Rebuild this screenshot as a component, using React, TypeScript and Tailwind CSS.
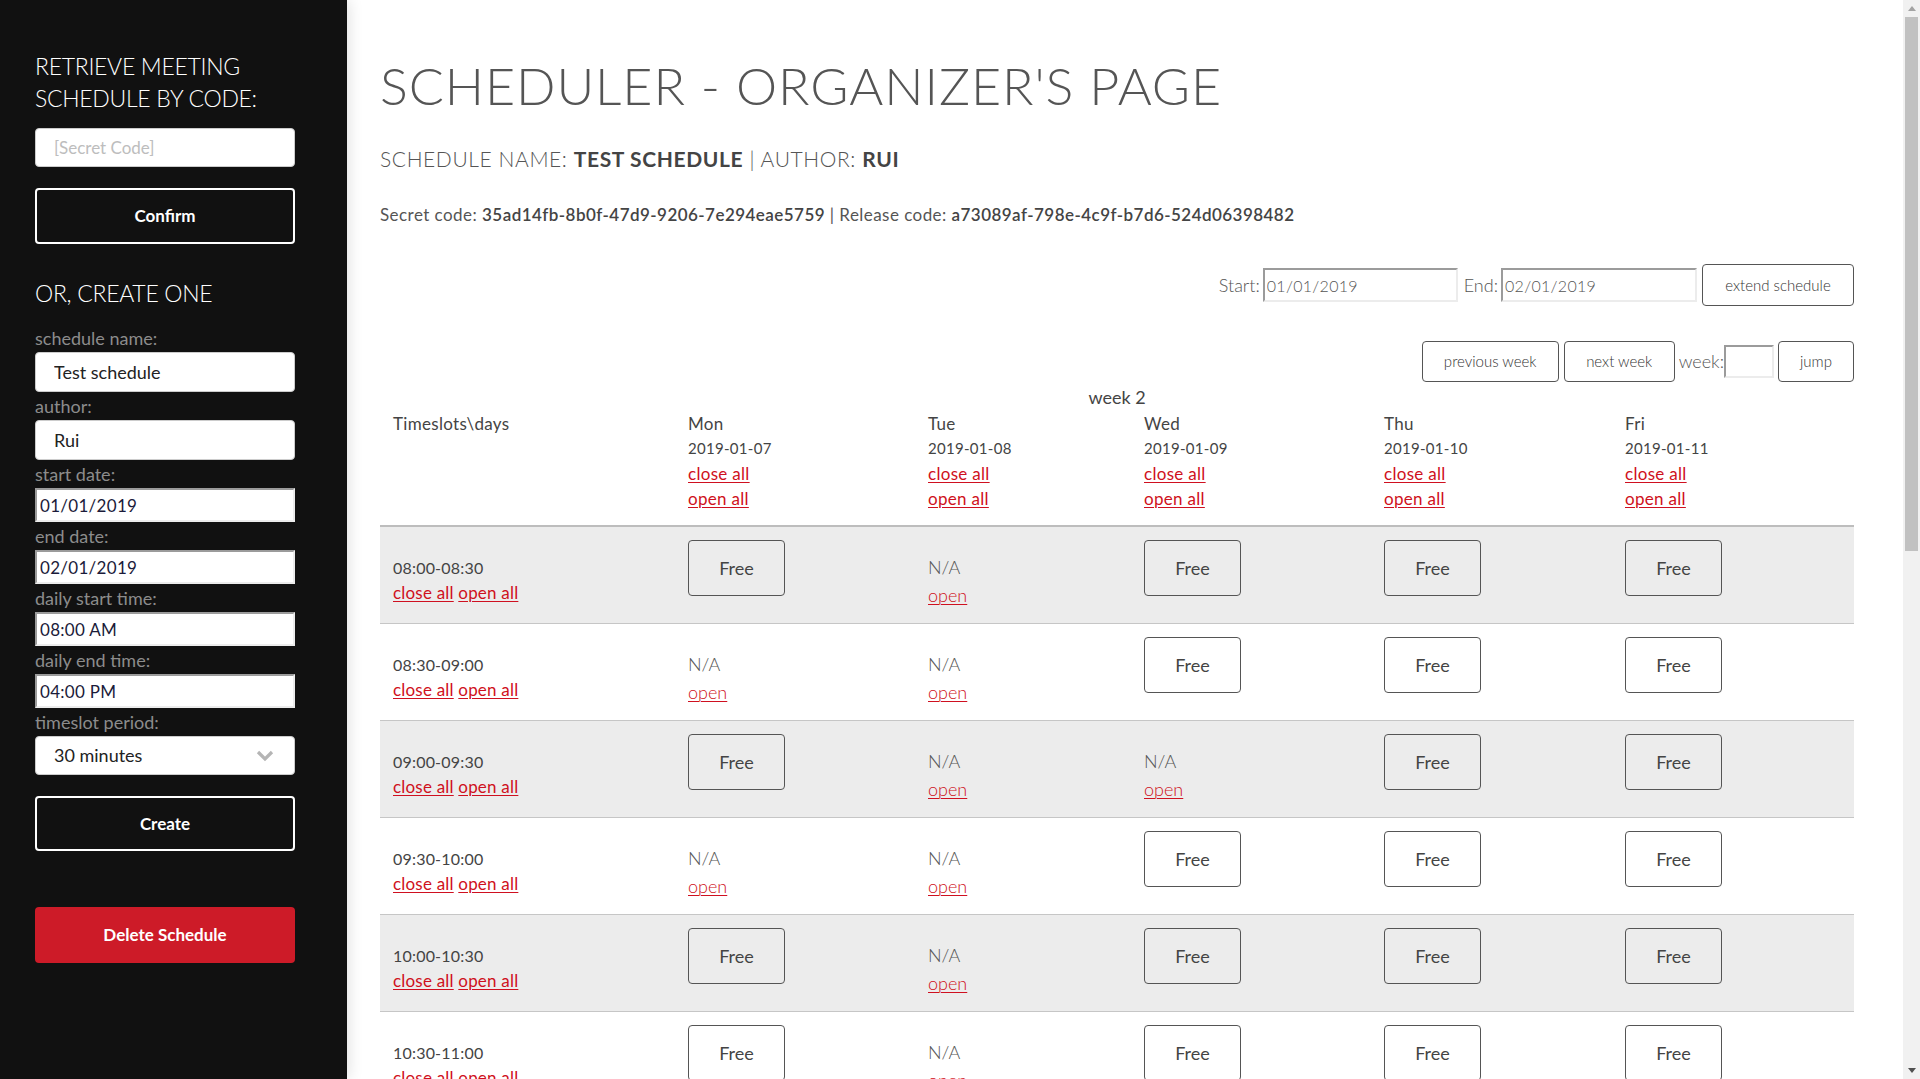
import React from "react";

type Cell = "F" | "N";
const rows: { time: string; cells: Cell[] }[] = [
  { time: "08:00-08:30", cells: ["F", "N", "F", "F", "F"] },
  { time: "08:30-09:00", cells: ["N", "N", "F", "F", "F"] },
  { time: "09:00-09:30", cells: ["F", "N", "N", "F", "F"] },
  { time: "09:30-10:00", cells: ["N", "N", "F", "F", "F"] },
  { time: "10:00-10:30", cells: ["F", "N", "F", "F", "F"] },
  { time: "10:30-11:00", cells: ["F", "N", "F", "F", "F"] },
  { time: "11:00-11:30", cells: ["F", "N", "F", "F", "F"] },
  { time: "11:30-12:00", cells: ["F", "N", "F", "F", "F"] },
];

const days = [
  { d: "Mon", date: "2019-01-07" },
  { d: "Tue", date: "2019-01-08" },
  { d: "Wed", date: "2019-01-09" },
  { d: "Thu", date: "2019-01-10" },
  { d: "Fri", date: "2019-01-11" },
];

const GRID = "grid grid-cols-[295px_240px_216px_240px_241px_242px]";
const LINK = "text-[#cf1020] underline underline-offset-2 decoration-1";
const INSET =
  "bg-white border-2 border-t-[#9b9b9b] border-l-[#9b9b9b] border-b-[#ececec] border-r-[#ececec] outline-none";

function Label({ children }: { children: React.ReactNode }) {
  return <div className="text-[18px] leading-[24px] text-[#8c8c8c] mb-[2px]">{children}</div>;
}

function Sidebar() {
  return (
    <div className="relative z-10 w-[347px] shrink-0 h-full bg-[#111111] pl-[35px] pt-[50px] shadow-[2px_0_14px_rgba(0,0,0,0.12)]">
      <div className="text-[23px] leading-[32px] font-light tracking-[-0.3px] text-white">
        RETRIEVE MEETING
        <br />
        SCHEDULE BY CODE:
      </div>
      <input
        className="mt-[14px] block h-[39px] w-[260px] rounded-[4px] bg-white border border-[#ccc] px-[18px] text-[17px] text-[#222] placeholder:text-[#bdbdbd] outline-none"
        placeholder="[Secret Code]"
      />
      <button className="mt-[21px] block h-[56px] w-[260px] rounded-[4px] border-2 border-white text-white text-[17px] font-bold">
        Confirm
      </button>
      <div className="mt-[33px] text-[23px] leading-[32px] font-light tracking-[-0.3px] text-white">OR, CREATE ONE</div>
      <div className="mt-[17px]">
        <Label>schedule name:</Label>
        <input
          className="block h-[40px] w-[260px] rounded-[4px] bg-white border border-[#ccc] px-[18px] text-[18px] text-[#222] outline-none mb-[2px]"
          defaultValue="Test schedule"
        />
        <Label>author:</Label>
        <input
          className="block h-[40px] w-[260px] rounded-[4px] bg-white border border-[#ccc] px-[18px] text-[18px] text-[#222] outline-none mb-[2px]"
          defaultValue="Rui"
        />
        <Label>start date:</Label>
        <input className={`block h-[34px] w-[260px] pl-[3px] text-[17px] tracking-[0.3px] text-[#1b1b3a] mb-[2px] ${INSET}`} defaultValue="01/01/2019" />
        <Label>end date:</Label>
        <input className={`block h-[34px] w-[260px] pl-[3px] text-[17px] tracking-[0.3px] text-[#1b1b3a] mb-[2px] ${INSET}`} defaultValue="02/01/2019" />
        <Label>daily start time:</Label>
        <input className={`block h-[34px] w-[260px] pl-[3px] text-[17px] tracking-[0.3px] text-[#1b1b3a] mb-[2px] ${INSET}`} defaultValue="08:00 AM" />
        <Label>daily end time:</Label>
        <input className={`block h-[34px] w-[260px] pl-[3px] text-[17px] tracking-[0.3px] text-[#1b1b3a] mb-[2px] ${INSET}`} defaultValue="04:00 PM" />
        <Label>timeslot period:</Label>
        <div className="flex h-[39px] w-[260px] items-center justify-between rounded-[4px] bg-white border border-[#ccc] pl-[18px] pr-[20px] text-[18px] text-[#222]">
          <span>30 minutes</span>
          <svg width="18" height="12" viewBox="0 0 18 12">
            <path d="M2 2 L9 9 L16 2" fill="none" stroke="#b5b5b5" strokeWidth="3.2" />
          </svg>
        </div>
      </div>
      <button className="mt-[21px] block h-[55px] w-[260px] rounded-[4px] border-2 border-white text-white text-[17px] font-bold">
        Create
      </button>
      <button className="mt-[56px] block h-[56px] w-[260px] rounded-[4px] bg-[#cd1b28] text-white text-[17px] font-bold">
        Delete Schedule
      </button>
    </div>
  );
}

function Btn({ children, w, h }: { children: React.ReactNode; w: string; h: string }) {
  return (
    <button className={`${w} ${h} rounded-[4px] border border-[#555] bg-white text-[15px] text-[#333]`}>{children}</button>
  );
}

function Scrollbar() {
  return (
    <div className="w-[17px] shrink-0 h-full bg-[#f1f1f1] flex flex-col items-center">
      <div className="h-[17px] flex items-center justify-center">
        <svg width="8" height="5" viewBox="0 0 8 5">
          <path d="M0 5 L4 0 L8 5 Z" fill="#a3a3a3" />
        </svg>
      </div>
      <div className="w-[13px] h-[534px] bg-[#c1c1c1]" />
      <div className="flex-1" />
      <div className="h-[17px] flex items-center justify-center">
        <svg width="8" height="5" viewBox="0 0 8 5">
          <path d="M0 0 L4 5 L8 0 Z" fill="#505050" />
        </svg>
      </div>
    </div>
  );
}

function Main() {
  return (
    <div className="flex-1 h-full overflow-hidden bg-white pl-[33px] pr-[49px] text-[#555]">
      <h1 className="mt-[59px] text-[52px] leading-none font-light tracking-[0.9px] text-[#555]">SCHEDULER - ORGANIZER'S PAGE</h1>
      <div className="mt-[37px] text-[21px] leading-none font-light tracking-[0.6px] text-[#555]">
        SCHEDULE NAME: <b className="font-bold text-[#444]">TEST SCHEDULE</b> | AUTHOR: <b className="font-bold text-[#444]">RUI</b>
      </div>
      <div className="mt-[37px] text-[17px] leading-none tracking-[0.45px] text-[#555]">
        Secret code: <span className="font-semibold text-[#444]">35ad14fb-8b0f-47d9-9206-7e294eae5759</span> | Release code:{" "}
        <span className="font-semibold text-[#444]">a73089af-798e-4c9f-b7d6-524d06398482</span>
      </div>
      <div className="mt-[41px] flex items-center justify-end text-[18px] font-light text-[#555]">
        <span className="mr-[3px]">Start:</span>
        <input className={`h-[34px] w-[195px] pl-[2px] text-[16px] tracking-[0.3px] text-[#555] ${INSET}`} defaultValue="01/01/2019" />
        <span className="ml-[6px] mr-[3px]">End:</span>
        <input className={`h-[34px] w-[196px] pl-[2px] text-[16px] tracking-[0.3px] text-[#555] ${INSET}`} defaultValue="02/01/2019" />
        <span className="ml-[5px]">
          <Btn w="w-[152px]" h="h-[42px]">extend schedule</Btn>
        </span>
      </div>
      <div className="mt-[35px] flex items-center justify-end text-[18px] font-light text-[#555]">
        <Btn w="w-[137px]" h="h-[41px]">previous week</Btn>
        <span className="ml-[5px]">
          <Btn w="w-[111px]" h="h-[41px]">next week</Btn>
        </span>
        <span className="ml-[4px]">week:</span>
        <input className={`h-[33px] w-[50px] ${INSET}`} />
        <span className="ml-[4px]">
          <Btn w="w-[76px]" h="h-[41px]">jump</Btn>
        </span>
      </div>
      <div className="mt-[3px] text-center text-[18px] leading-[25px] text-[#444]">week 2</div>
      <div className={`${GRID} pt-[1px] pb-[14px] border-b-2 border-[#bdbdbd] text-[15px] leading-[25px] tracking-[0.3px] text-[#444]`}>
        <div className="pl-[13px] text-[17px]">Timeslots\days</div>
        {days.map((d) => (
          <div key={d.d} className="pl-[13px]">
            <div className="text-[17px]">{d.d}</div>
            <div>{d.date}</div>
            <div className="text-[17px]">
              <a className={LINK}>close all</a>
            </div>
            <div className="text-[17px]">
              <a className={LINK}>open all</a>
            </div>
          </div>
        ))}
      </div>
      {rows.map((r, i) => (
        <div
          key={r.time}
          className={`${GRID} h-[97px] border-b border-[#c6c6c6] ${i % 2 === 0 ? "bg-[#ececec]" : "bg-white"}`}
        >
          <div className="pl-[13px] pt-[28px] leading-[25px] text-[#444]">
            <div className="text-[16px] tracking-[0.2px]">{r.time}</div>
            <div className="text-[17px] tracking-[0.2px]">
              <a className={LINK}>close all</a> <a className={LINK}>open all</a>
            </div>
          </div>
          {r.cells.map((c, j) =>
            c === "F" ? (
              <div key={j} className="pl-[13px] pt-[13px]">
                <button className="w-[97px] h-[56px] rounded-[4px] border border-[#555] text-[18px] text-[#444]">Free</button>
              </div>
            ) : (
              <div key={j} className="pl-[13px] pt-[28px] text-[18px] font-light">
                <div className="leading-[25px] text-[#555]">N/A</div>
                <div className="leading-[31px]">
                  <a className={LINK}>open</a>
                </div>
              </div>
            )
          )}
        </div>
      ))}
    </div>
  );
}

export default function App() {
  return (
    <div className="flex h-[1079px] w-full overflow-hidden [font-family:Lato,'Open_Sans',sans-serif]">
      <Sidebar />
      <Main />
      <Scrollbar />
    </div>
  );
}
